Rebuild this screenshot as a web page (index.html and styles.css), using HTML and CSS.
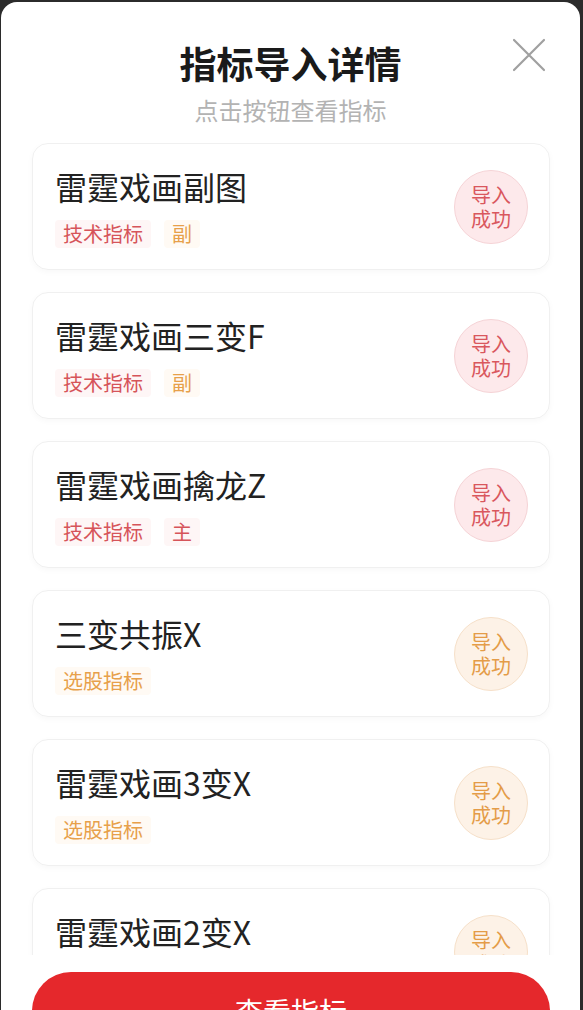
FILE: index.html
```html
<!DOCTYPE html>
<html lang="zh-CN">
<head>
<meta charset="utf-8">
<title>指标导入详情</title>
<link rel="stylesheet" href="styles.css">
</head>
<body>
<div class="sheet">
  <header class="head">
    <h1 class="title">指标导入详情</h1>
    <p class="sub">点击按钮查看指标</p>
    <button class="close" aria-label="关闭">
      <svg width="34" height="34" viewBox="0 0 34 34"><path d="M2 2 L32 32 M32 2 L2 32" stroke="#a0a0a0" stroke-width="2.2" stroke-linecap="round" fill="none"/></svg>
    </button>
  </header>
  <div class="list">
    <div class="card">
      <div class="info">
        <div class="name">雷霆戏画副图</div>
        <div class="tags"><span class="tag red">技术指标</span><span class="tag orange">副</span></div>
      </div>
      <div class="badge red"><span>导入</span><span>成功</span></div>
    </div>
    <div class="card">
      <div class="info">
        <div class="name">雷霆戏画三变F</div>
        <div class="tags"><span class="tag red">技术指标</span><span class="tag orange">副</span></div>
      </div>
      <div class="badge red"><span>导入</span><span>成功</span></div>
    </div>
    <div class="card">
      <div class="info">
        <div class="name">雷霆戏画擒龙Z</div>
        <div class="tags"><span class="tag red">技术指标</span><span class="tag red">主</span></div>
      </div>
      <div class="badge red"><span>导入</span><span>成功</span></div>
    </div>
    <div class="card">
      <div class="info">
        <div class="name">三变共振X</div>
        <div class="tags"><span class="tag orange">选股指标</span></div>
      </div>
      <div class="badge orange"><span>导入</span><span>成功</span></div>
    </div>
    <div class="card">
      <div class="info">
        <div class="name">雷霆戏画3变X</div>
        <div class="tags"><span class="tag orange">选股指标</span></div>
      </div>
      <div class="badge orange"><span>导入</span><span>成功</span></div>
    </div>
    <div class="card">
      <div class="info">
        <div class="name">雷霆戏画2变X</div>
        <div class="tags"><span class="tag orange">选股指标</span></div>
      </div>
      <div class="badge orange"><span>导入</span><span>成功</span></div>
    </div>
  </div>
  <div class="foot">
    <button class="btn">查看指标</button>
  </div>
</div>
</body>
</html>
```
FILE: styles.css
```css
* { box-sizing: border-box; }
html, body { margin: 0; padding: 0; }
body {
  background: #2b2b2b;
  width: 583px;
  height: 1010px;
  overflow: hidden;
  font-family: "Noto Sans CJK SC", "Noto Sans", sans-serif;
  padding: 2px 3px 0 1px;
}
.sheet {
  background: #fff;
  width: 579px;
  height: 1008px;
  border-radius: 16px 16px 0 0;
  display: flex;
  flex-direction: column;
  overflow: hidden;
}
.head {
  position: relative;
  display: flex;
  flex-direction: column;
  align-items: center;
  padding-top: 39px;
  flex: none;
}
.title {
  margin: 0;
  font-size: 37px;
  line-height: 44px;
  font-weight: 700;
  color: #1a1a1a;
}
.sub {
  margin: 10px 0 0;
  font-size: 24px;
  line-height: 30px;
  color: #b3b3b3;
}
.close {
  position: absolute;
  right: 34px;
  top: 36px;
  border: 0;
  background: none;
  padding: 0;
  width: 34px;
  height: 34px;
}
.list {
  margin-top: 18px;
  flex: none;
  height: 812px;
  overflow: hidden;
  display: flex;
  flex-direction: column;
  gap: 22px;
  padding: 0 30px 0 31px;
}
.card {
  flex: none;
  height: 127px;
  border: 1px solid #f0f0f0;
  border-radius: 16px;
  box-shadow: 0 2px 6px rgba(0,0,0,0.03);
  display: flex;
  align-items: center;
  padding: 0 21px 0 22px;
}
.info {
  flex: 1;
  display: flex;
  flex-direction: column;
  gap: 14px;
}
.name {
  font-size: 32px;
  line-height: 40px;
  color: #222;
}
.tags {
  display: flex;
  gap: 13px;
}
.tag {
  font-size: 20px;
  line-height: 28px;
  padding: 0 8px;
  border-radius: 4px;
}
.tag.red { color: #d6545a; background: #fef6f6; }
.tag.orange { color: #e7a04a; background: #fffaf4; }
.badge {
  flex: none;
  width: 74px;
  height: 74px;
  border-radius: 50%;
  display: flex;
  flex-direction: column;
  align-items: center;
  justify-content: center;
  font-size: 20px;
  line-height: 24px;
}
.badge span { display: block; }
.badge.red { background: #fde9eb; border: 1px solid #f5d3d6; color: #d9575d; }
.badge.orange { background: #fdf2e7; border: 1px solid #f6e0c9; color: #e49c48; }
.foot {
  padding: 17px 30px 0 31px;
  flex: none;
}
.btn {
  width: 100%;
  height: 78px;
  border: 0;
  border-radius: 39px;
  background: #e5282c;
  color: #fff;
  font-family: inherit;
  font-size: 28px;
  line-height: 78px;
  padding: 0;
}
```
